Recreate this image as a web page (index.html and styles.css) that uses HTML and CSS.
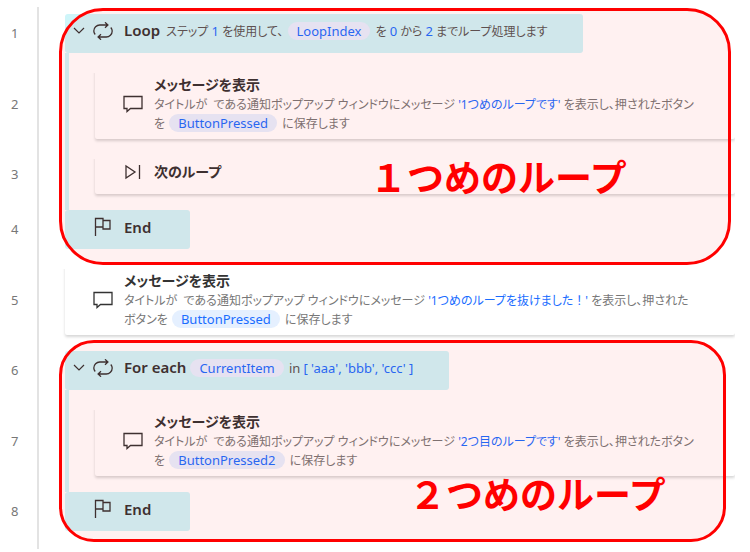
FILE: index.html
```
<!DOCTYPE html>
<html lang="ja">
<head>
    <meta charset="UTF-8">
    <meta name="viewport" content="width=device-width, initial-scale=1.0">
    <title>ループ処理のフロー</title>
    <link rel="stylesheet" href="styles.css">
</head>
<body>
    <!-- Shared icons -->
    <svg class="icon-defs" aria-hidden="true">
        <symbol id="icon-chevron" viewBox="0 0 12 8">
            <path d="M1 1l5 5 5-5"/>
        </symbol>
        <symbol id="icon-loop" viewBox="0 0 20 18">
            <path d="M2.200 12.500C1.200 11.300 .8 10.200 .8 9c0-3.400 2.700-6 6-6h8.200M12 .3L14.900 3 12 5.700M17.800 5.500c1 1.200 1.400 2.300 1.400 3.500 0 3.400-2.700 6-6 6H5M8 12.300L5.100 15 8 17.700"/>
        </symbol>
        <symbol id="icon-message" viewBox="0 0 20 18">
            <path d="M1 1.500h18v12H7.500L4 16.500v-3H1z"/>
        </symbol>
        <symbol id="icon-next" viewBox="0 0 20 18">
            <path d="M3 3v12l9-6zM16.500 2v14"/>
        </symbol>
        <symbol id="icon-flag" viewBox="0 0 20 20">
            <path d="M2.500 19V1.500h7.500v8.500H2.500M10 3.500h7v8.500h-7v-2"/>
        </symbol>
    </svg>

    <main class="flow">
        <section class="loop">
            <div class="row">
                <span class="line-number">1</span>
                <div class="cell">
                    <div class="block block-first">
                        <button class="toggle" type="button" aria-label="折りたたむ"><svg class="chevron"><use href="#icon-chevron"/></svg></button>
                        <svg class="icon"><use href="#icon-loop"/></svg>
                        <p class="summary"><strong class="name">Loop</strong> ステップ <span class="number">1</span> を使用して、 <span class="chip">LoopIndex</span> を <span class="number">0</span> から <span class="number">2</span> までループ処理します</p>
                    </div>
                </div>
            </div>
            <div class="row row-gap">
                <span class="line-number">2</span>
                <div class="cell nested">
                    <div class="card">
                        <svg class="icon"><use href="#icon-message"/></svg>
                        <div class="text">
                            <h2 class="title">メッセージを表示</h2>
                            <p class="description">タイトルが &nbsp;である通知ポップアップ ウィンドウにメッセージ <span class="value">'1つめのループです'</span> を表示し、押されたボタン<br>を <span class="chip">ButtonPressed</span> に保存します</p>
                        </div>
                    </div>
                </div>
            </div>
            <div class="row row-gap row-last">
                <span class="line-number">3</span>
                <div class="cell nested">
                    <div class="card card-short">
                        <svg class="icon"><use href="#icon-next"/></svg>
                        <h2 class="title">次のループ</h2>
                    </div>
                </div>
            </div>
            <div class="row">
                <span class="line-number">4</span>
                <div class="cell">
                    <div class="block block-end">
                        <svg class="icon icon-flag"><use href="#icon-flag"/></svg>
                        <strong class="name">End</strong>
                    </div>
                </div>
            </div>
            <div class="marker marker-first"></div>
            <p class="marker-label label-first">１つめのループ</p>
        </section>

        <div class="row row-gap row-last">
            <span class="line-number">5</span>
            <div class="cell">
                <div class="card">
                    <svg class="icon"><use href="#icon-message"/></svg>
                    <div class="text">
                        <h2 class="title">メッセージを表示</h2>
                        <p class="description">タイトルが &nbsp;である通知ポップアップ ウィンドウにメッセージ <span class="value">'1つめのループを抜けました<span class="wide">！</span>'</span> を表示し、押された<br>ボタンを <span class="chip">ButtonPressed</span> に保存します</p>
                    </div>
                </div>
            </div>
        </div>

        <section class="loop">
            <div class="row">
                <span class="line-number">6</span>
                <div class="cell">
                    <div class="block block-second">
                        <button class="toggle" type="button" aria-label="折りたたむ"><svg class="chevron"><use href="#icon-chevron"/></svg></button>
                        <svg class="icon"><use href="#icon-loop"/></svg>
                        <p class="summary"><strong class="name">For each</strong><span class="chip">CurrentItem</span> <span class="keyword">in</span> <span class="number">[ 'aaa', 'bbb', 'ccc' ]</span></p>
                    </div>
                </div>
            </div>
            <div class="row row-gap row-last">
                <span class="line-number">7</span>
                <div class="cell nested">
                    <div class="card">
                        <svg class="icon"><use href="#icon-message"/></svg>
                        <div class="text">
                            <h2 class="title">メッセージを表示</h2>
                            <p class="description">タイトルが &nbsp;である通知ポップアップ ウィンドウにメッセージ <span class="value">'2つ目のループです'</span> を表示し、押されたボタン<br>を <span class="chip">ButtonPressed2</span> に保存します</p>
                        </div>
                    </div>
                </div>
            </div>
            <div class="row">
                <span class="line-number">8</span>
                <div class="cell">
                    <div class="block block-end">
                        <svg class="icon icon-flag"><use href="#icon-flag"/></svg>
                        <strong class="name">End</strong>
                    </div>
                </div>
            </div>
            <div class="marker marker-second"></div>
            <p class="marker-label label-second">２つめのループ</p>
        </section>
    </main>
</body>
</html>
```
FILE: styles.css
```
* {
    box-sizing: border-box;
}
body {
    margin: 0;
    background-color: #fff;
    color: #555;
    font-family: "Noto Sans", "Noto Sans CJK JP", sans-serif;
    font-feature-settings: "palt";
    font-size: 12px;
    line-height: 19px;
}
h2,
p {
    margin: 0;
}
.icon-defs {
    position: absolute;
    width: 0;
    height: 0;
}
.flow {
    margin: 7px 15px 0 0;
    padding: 7px 0 18px;
    background: linear-gradient(#e3e3e3, #e3e3e3) 37px 0 / 2px 100% no-repeat;
}
.loop {
    position: relative;
}

/* Rows */
.row {
    display: grid;
    grid-template-columns: 65px 1fr;
}
.line-number {
    display: flex;
    align-items: center;
    padding-left: 11px;
    color: #777;
    font-size: 13px;
}
.cell {
    min-width: 0;
}
.row-gap .line-number,
.row-gap .cell {
    padding-top: 16px;
}
.row-last .line-number,
.row-last .cell {
    padding-bottom: 16px;
}
.nested {
    padding-left: 26px;
    border-left: 4px solid #cef5f9;
}

/* Steps */
.block {
    display: flex;
    align-items: center;
    height: 39px;
    padding: 0 0 5px 8px;
    background-color: #cef5f9;
    border-radius: 3px;
    white-space: nowrap;
}
.block-first {
    width: 518px;
}
.block-second {
    width: 384px;
}
.block-end {
    width: 125px;
    padding-left: 28px;
}
.card {
    display: flex;
    align-items: center;
    min-height: 39px;
    padding: 6px 0 6px 28px;
    background-color: #fff;
    border-radius: 2px;
    box-shadow: 0 2px 3px rgba(0, 0, 0, 0.16);
    clip-path: inset(4px 0 -5px -3px);
    white-space: nowrap;
}
.card-short {
    padding: 0 0 5px 28px;
}
.toggle {
    display: flex;
    width: 12px;
    margin-right: 8px;
    padding: 0;
    border: none;
    background: none;
    cursor: pointer;
}
.chevron {
    width: 12px;
    height: 8px;
    fill: none;
    stroke: #333;
    stroke-width: 1.2;
}
.icon {
    flex: none;
    width: 20px;
    height: 18px;
    margin-right: 11px;
    fill: none;
    stroke: #333;
    stroke-width: 1.3;
}
.icon-flag {
    height: 20px;
}
.name,
.title {
    color: #333;
    font-weight: 600;
}
.name {
    margin-right: 3px;
    font-size: 15px;
}
.title {
    font-size: 14px;
    line-height: 20px;
}
.description {
    color: #777;
}
.value,
.number,
.chip {
    color: #1a6dff;
}
.number,
.keyword,
.chip {
    font-size: 13px;
}
.wide {
    font-feature-settings: normal;
}
.chip {
    display: inline-block;
    height: 18px;
    margin: 0 2px 0 1px;
    padding: 0 9px;
    background-color: #e5f0ff;
    border-radius: 9px;
    line-height: 18px;
}

/* Red markers over the loops */
.marker {
    position: absolute;
    left: 59px;
    border: 3px solid #f00;
    background-color: rgba(255, 0, 0, 0.055);
    background-clip: padding-box;
}
.marker-first {
    top: -6px;
    right: 4px;
    bottom: -16px;
    border-radius: 44px;
}
.marker-second {
    top: -11px;
    right: 9px;
    bottom: -11px;
    border-radius: 35px;
}
.marker-label {
    position: absolute;
    color: #f00;
    font-family: "Noto Sans CJK JP", sans-serif;
    font-feature-settings: normal;
    font-size: 37px;
    font-weight: 700;
    line-height: 44px;
    white-space: nowrap;
}
.label-first {
    top: 140px;
    left: 370px;
}
.label-second {
    bottom: 16px;
    left: 409px;
}
```
